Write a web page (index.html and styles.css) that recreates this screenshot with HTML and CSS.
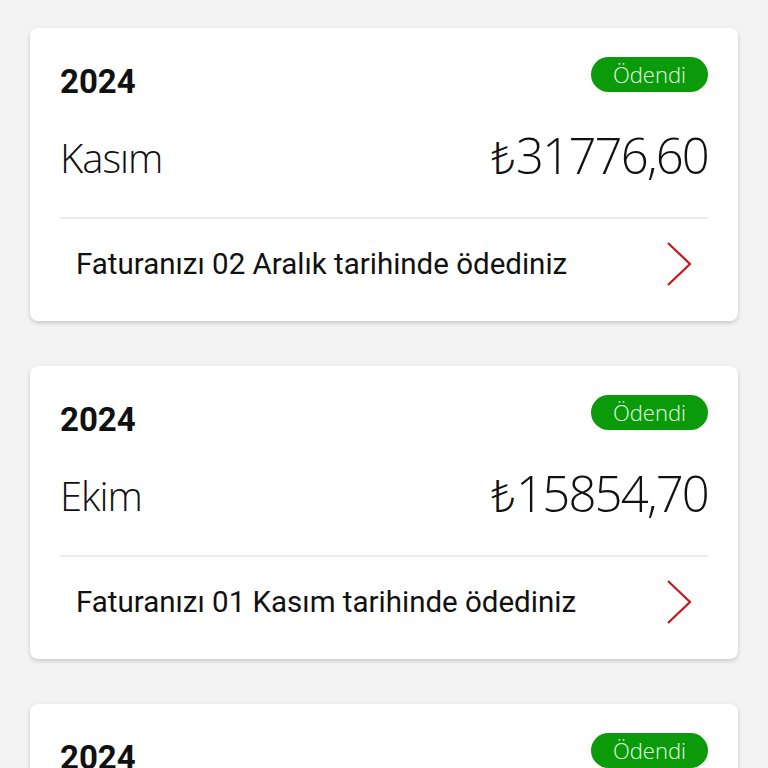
FILE: index.html
```html
<!DOCTYPE html>
<html lang="tr">
<head>
<meta charset="UTF-8">
<meta name="viewport" content="width=device-width, initial-scale=1.0">
<title>Faturalarım</title>
<link rel="stylesheet" href="styles.css">
</head>
<body>

  <main class="list">
    <div class="card">
      <div class="card-head">
        <span class="year">2024</span>
        <span class="badge">Ödendi</span>
      </div>
      <div class="card-main">
        <span class="month">Kasım</span>
        <span class="amount"><span class="cur">₺</span>31776,60</span>
      </div>
      <a class="card-foot" href="#">
        <span>Faturanızı 02 Aralık tarihinde ödediniz</span>
        <svg class="chevron" width="26" height="46" viewBox="0 0 26 46"><path d="M2 2 L24 23 L2 44" fill="none" stroke="#c8161b" stroke-width="2.2"/></svg>
      </a>
    </div>

    <div class="card">
      <div class="card-head">
        <span class="year">2024</span>
        <span class="badge">Ödendi</span>
      </div>
      <div class="card-main">
        <span class="month">Ekim</span>
        <span class="amount"><span class="cur">₺</span>15854,70</span>
      </div>
      <a class="card-foot" href="#">
        <span>Faturanızı 01 Kasım tarihinde ödediniz</span>
        <svg class="chevron" width="26" height="46" viewBox="0 0 26 46"><path d="M2 2 L24 23 L2 44" fill="none" stroke="#c8161b" stroke-width="2.2"/></svg>
      </a>
    </div>

    <div class="card">
      <div class="card-head">
        <span class="year">2024</span>
        <span class="badge">Ödendi</span>
      </div>
      <div class="card-main">
        <span class="month">Eylül</span>
        <span class="amount"><span class="cur">₺</span>14210,30</span>
      </div>
      <a class="card-foot" href="#">
        <span>Faturanızı 01 Ekim tarihinde ödediniz</span>
        <svg class="chevron" width="26" height="46" viewBox="0 0 26 46"><path d="M2 2 L24 23 L2 44" fill="none" stroke="#c8161b" stroke-width="2.2"/></svg>
      </a>
    </div>
  </main>

</body>
</html>
```

FILE: styles.css
```css
body {
  margin: 0;
  background-color: #f3f3f3;
  font-family: Roboto, "Liberation Sans", sans-serif;
  color: #111;
}
.list {
  display: flex;
  flex-direction: column;
  gap: 45px;
  padding: 28px 30px;
}
.card {
  background-color: #fff;
  border-radius: 8px;
  box-shadow: 0 2px 4px rgba(0, 0, 0, 0.18);
  padding: 0 30px 12px;
}
.card-head {
  display: flex;
  justify-content: space-between;
  align-items: flex-start;
  padding-top: 29px;
  height: 35px;
}
.year {
  font-size: 33px;
  font-weight: bold;
  line-height: 35px;
  margin-top: 7px;
}
.badge {
  background-color: #0a9a0a;
  color: #e4ffe4;
  font-family: "Open Sans", sans-serif;
  font-weight: 300;
  font-size: 22px;
  line-height: 35px;
  height: 35px;
  padding: 0 22px;
  border-radius: 18px;
}
.card-main {
  display: flex;
  justify-content: space-between;
  align-items: center;
  height: 125px;
  border-bottom: 2px solid #ececec;
  font-family: "Open Sans", sans-serif;
  font-weight: 300;
}
.month {
  font-size: 40px;
  letter-spacing: -1px;
  padding-top: 6px;
}
.amount {
  font-size: 49px;
  letter-spacing: -1.8px;
}
.cur {
  font-family: "Noto Sans", "DejaVu Sans", sans-serif;
  font-weight: 300;
  font-size: 44px;
  margin-right: 2px;
}
.card-foot {
  display: flex;
  justify-content: space-between;
  align-items: center;
  height: 90px;
  padding: 0 16px;
  color: #111;
  text-decoration: none;
  font-size: 29.5px;
}
.chevron {
  display: block;
}
```
